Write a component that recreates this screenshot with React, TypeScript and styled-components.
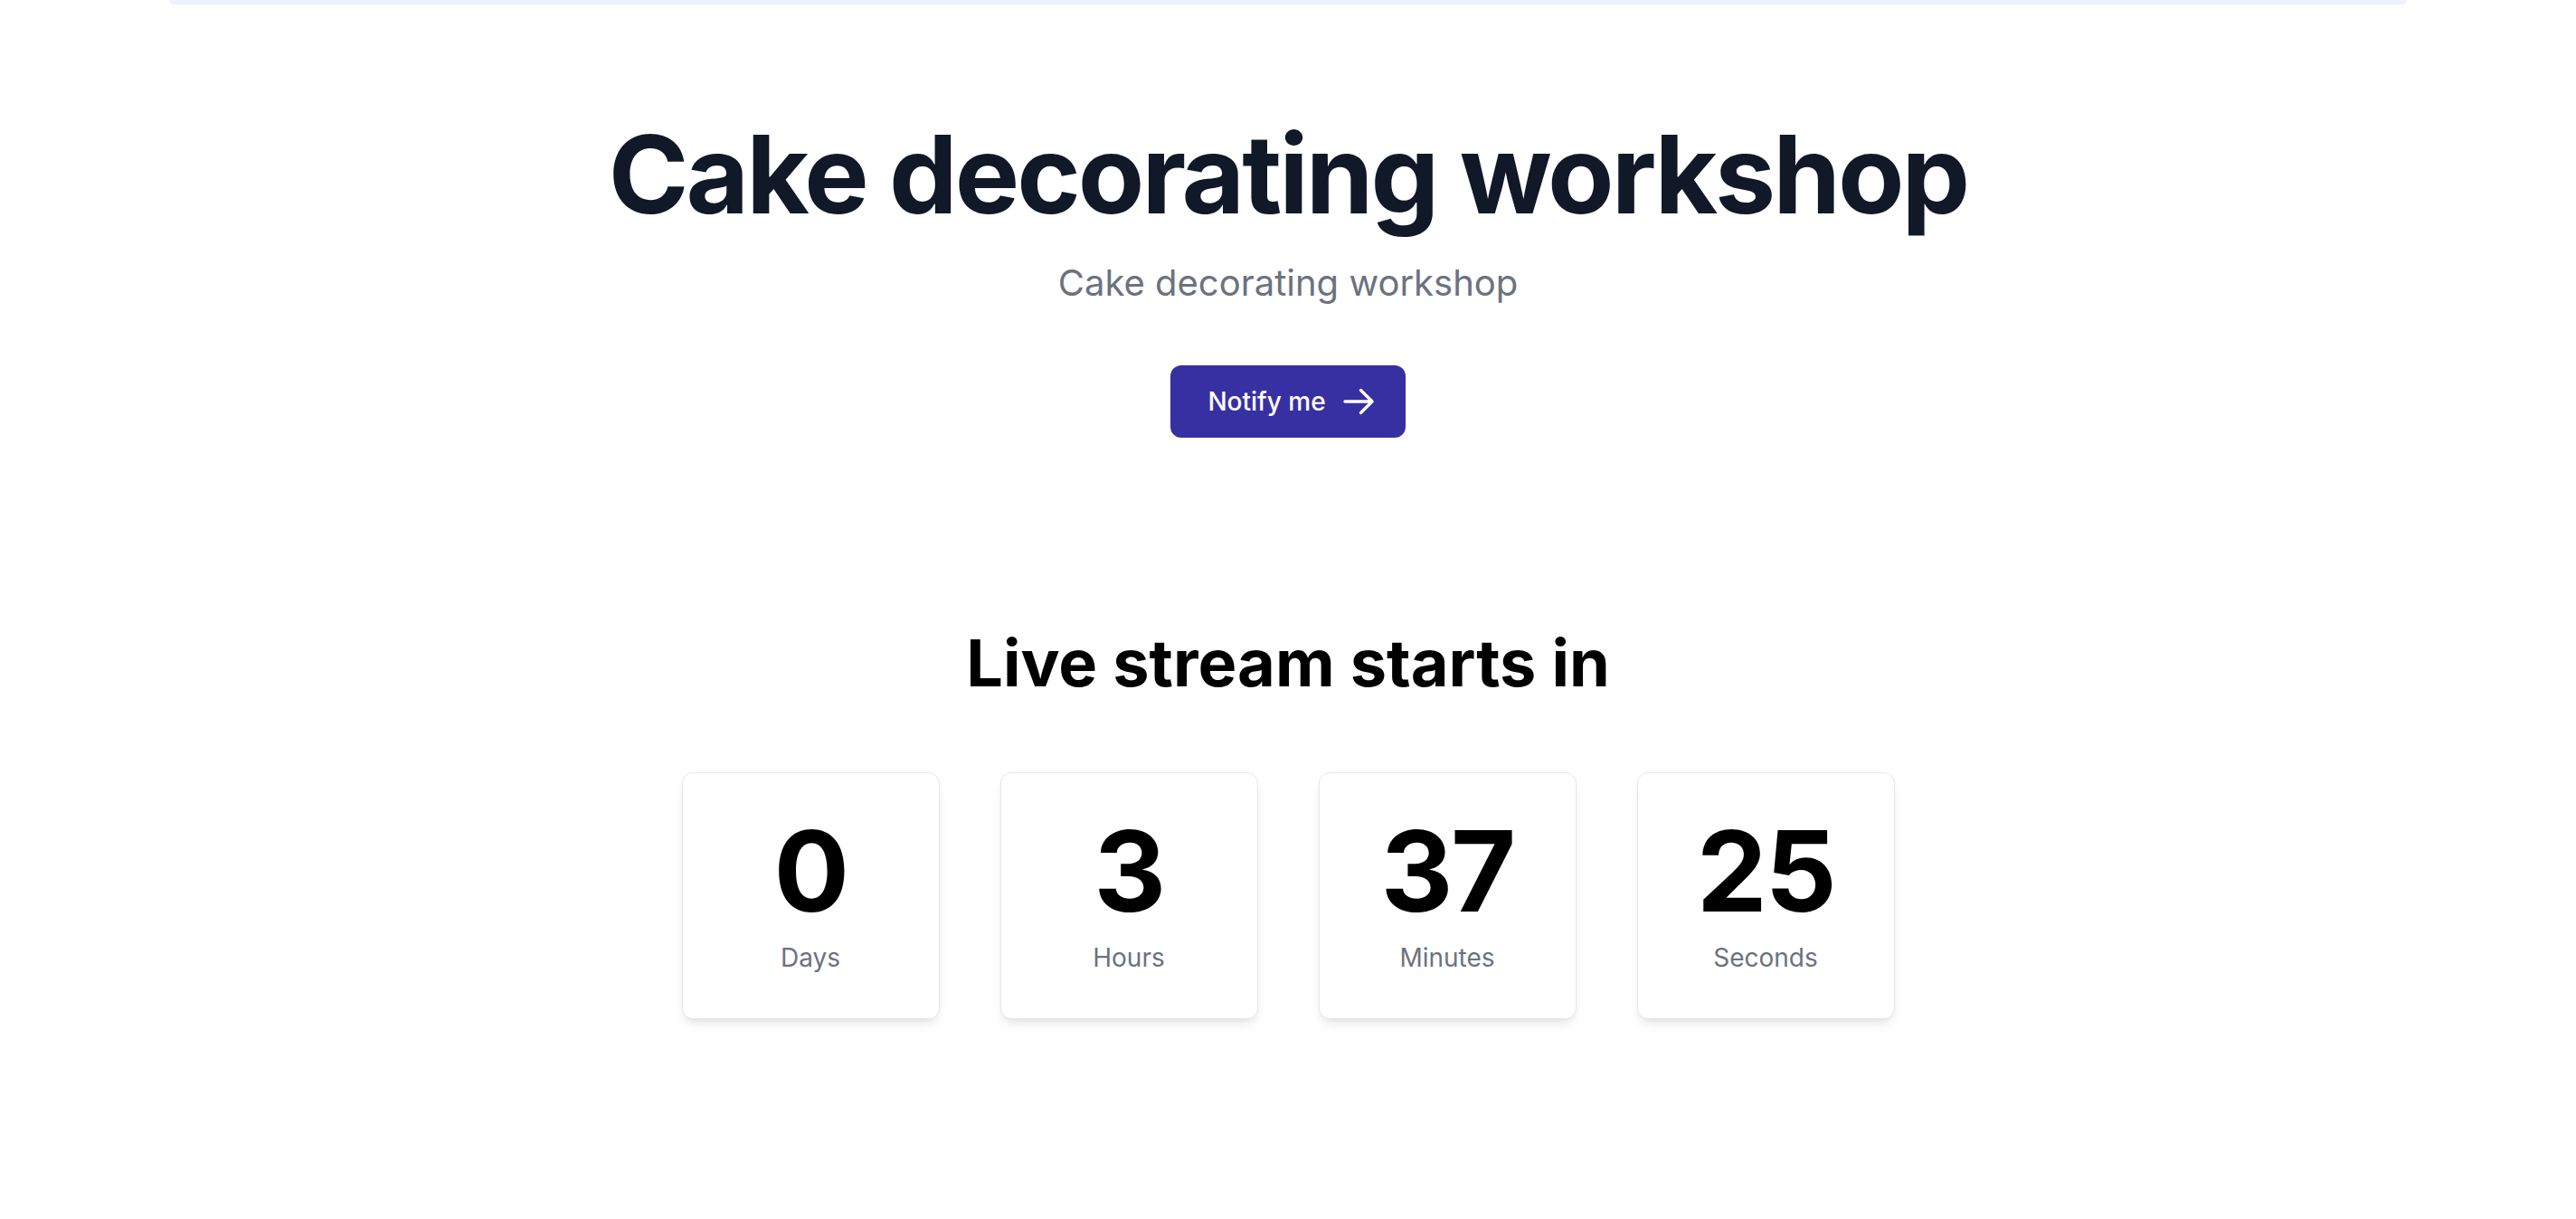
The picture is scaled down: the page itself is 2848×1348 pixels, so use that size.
import React from 'react'
import styled, { createGlobalStyle } from 'styled-components'

const GlobalStyle = createGlobalStyle`
    html, body {
        margin: 0;
        padding: 0;
        background: #ffffff;
    }
    body {
        font-family: Inter, "Noto Sans", "Liberation Sans", sans-serif;
        -webkit-font-smoothing: antialiased;
    }
    * {
        box-sizing: border-box;
    }
`

const Page = styled.div`
    min-height: 1348px;
    display: flex;
    flex-direction: column;
    align-items: center;
`

const TopBar = styled.div`
    width: 2474px;
    height: 5px;
    background: #eef2ff;
    border-radius: 0 0 16px 16px;
`

const Hero = styled.section`
    display: flex;
    flex-direction: column;
    align-items: center;
    padding-top: 128px;
`

const Title = styled.h1`
    margin: 0;
    font-size: 120px;
    line-height: 1;
    font-weight: 700;
    letter-spacing: -0.025em;
    color: #111827;
`

const Subtitle = styled.p`
    margin: 32px 0 0;
    font-size: 40px;
    line-height: 56px;
    color: #6b7280;
`

const NotifyButton = styled.button`
    margin-top: 63px;
    display: flex;
    align-items: center;
    gap: 16px;
    height: 80px;
    padding: 0 32px 0 41px;
    border: none;
    border-radius: 12px;
    background: #3730a3;
    color: #ffffff;
    font-family: inherit;
    font-size: 28px;
    line-height: 40px;
    font-weight: 500;
    cursor: pointer;
`

const Countdown = styled.section`
    margin-top: 209px;
    display: flex;
    flex-direction: column;
    align-items: center;
`

const CountdownTitle = styled.h2`
    margin: 0;
    font-size: 72px;
    line-height: 80px;
    font-weight: 700;
    color: #000000;
`

const Cards = styled.div`
    margin-top: 81px;
    display: grid;
    grid-template-columns: repeat(4, 285px);
    gap: 67px;
`

const Card = styled.div`
    display: flex;
    flex-direction: column;
    align-items: center;
    height: 273px;
    padding-top: 46px;
    border: 1px solid #e5e7eb;
    border-radius: 12px;
    background: #ffffff;
    box-shadow: 0 8px 14px -4px rgba(0, 0, 0, 0.1), 0 3px 6px -3px rgba(0, 0, 0, 0.08);
`

const Value = styled.div`
    font-size: 124px;
    line-height: 1;
    font-weight: 700;
    letter-spacing: -0.02em;
    color: #000000;
`

const Label = styled.div`
    margin-top: 14px;
    font-size: 28px;
    line-height: 40px;
    color: #6b7280;
`

const ArrowIcon = () => (
    <svg width="40" height="40" viewBox="0 0 24 24" fill="none" stroke="currentColor" strokeWidth="2" strokeLinecap="round" strokeLinejoin="round">
        <path d="M13.5 4.5 21 12m0 0-7.5 7.5M21 12H3" />
    </svg>
)

const units = [
    { value: 0, label: 'Days' },
    { value: 3, label: 'Hours' },
    { value: 37, label: 'Minutes' },
    { value: 25, label: 'Seconds' },
]

const App = () => {
    return (
        <>
            <GlobalStyle />
            <Page>
                <TopBar />
                <Hero>
                    <Title>Cake decorating workshop</Title>
                    <Subtitle>Cake decorating workshop</Subtitle>
                    <NotifyButton>
                        Notify me
                        <ArrowIcon />
                    </NotifyButton>
                </Hero>
                <Countdown>
                    <CountdownTitle>Live stream starts in</CountdownTitle>
                    <Cards>
                        {units.map(u => (
                            <Card key={u.label}>
                                <Value>{u.value}</Value>
                                <Label>{u.label}</Label>
                            </Card>
                        ))}
                    </Cards>
                </Countdown>
            </Page>
        </>
    )
}

export default App
